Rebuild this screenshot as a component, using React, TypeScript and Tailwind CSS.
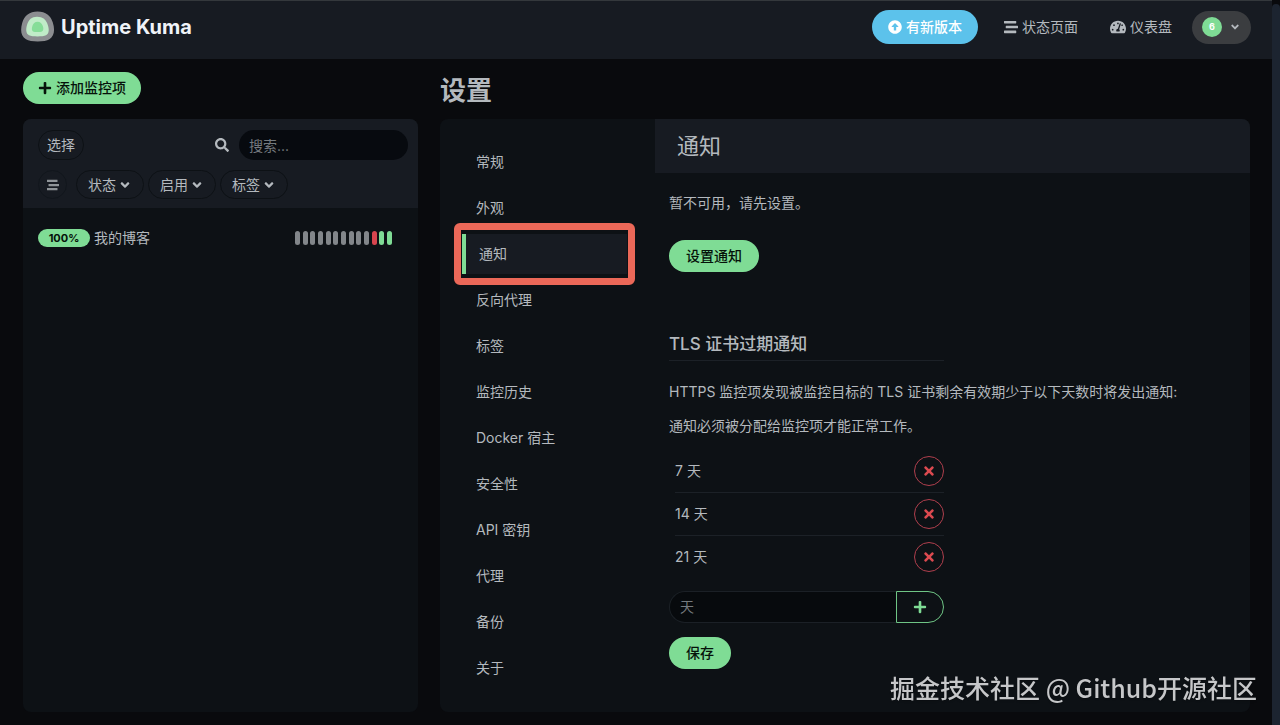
import React, { useState } from 'react';
import {
  FaArrowAltCircleUp,
  FaAngleDown,
  FaPlus,
  FaSearch,
  FaStream,
  FaTachometerAlt,
  FaTimes,
} from 'react-icons/fa';

const menuItems = [
  '常规',
  '外观',
  '通知',
  '反向代理',
  '标签',
  '监控历史',
  'Docker 宿主',
  '安全性',
  'API 密钥',
  '代理',
  '备份',
  '关于',
];

const filters = ['状态', '启用', '标签'];

const beats = [...Array(10).fill('empty'), 'down', 'up', 'up'];

const beatColors: Record<string, string> = {
  empty: 'bg-[#82868a]',
  down: 'bg-[#d8454e]',
  up: 'bg-[#7fdc95]',
};

function Logo() {
  return (
    <svg className="h-8 w-[34px] shrink-0" viewBox="0 0 34 32" aria-hidden="true">
      <path
        d="M16.5 0.5C25 0.5 29.5 4.5 31.8 11.5C34.2 19 33.2 25 28.4 28.2C24 31.2 9.5 31.2 5 28.2C-0.2 25 -0.8 19 1.2 12C3.4 4.5 8.5 0.5 16.5 0.5Z"
        fill="#8b8d90"
      />
      <path
        d="M16 5.8C22 5.8 25 8.6 26.8 14C28.4 19 28 22.6 25 24.2C21.6 25.8 11.4 25.8 8 24.2C5 22.6 4.6 19 6 14C7.6 8.6 10.6 5.8 16 5.8Z"
        fill="#c0ecc8"
      />
      <path
        d="M16.5 10.8C19.4 10.8 20.8 12.4 21.8 15C22.7 17.6 22.6 19.6 21 20.4C19.2 21.1 13.8 21.1 12 20.4C10.6 19.6 10.6 17.6 11.4 15C12.2 12.4 13.8 10.8 16.5 10.8Z"
        fill="#86dd98"
      />
    </svg>
  );
}

function Header() {
  return (
    <header className="flex h-[59px] items-center justify-between border-t border-[#34383c] bg-[#171b22] px-[21px] pb-1.5">
      <a href="#" className="flex items-center gap-1.5 text-xl font-bold text-[#f0f3f8]">
        <Logo />
        Uptime Kuma
      </a>
      <nav className="flex items-center">
        <a
          href="#"
          className="flex h-[34px] items-center gap-1 rounded-full bg-[#5cc2eb] px-4 font-medium text-white"
        >
          <FaArrowAltCircleUp className="size-3.5" />
          有新版本
        </a>
        <a href="#" className="ml-[26px] flex items-center gap-1">
          <FaStream className="size-3.5" />
          状态页面
        </a>
        <a href="#" className="ml-8 flex items-center gap-1">
          <FaTachometerAlt className="size-4" />
          仪表盘
        </a>
        <button className="ml-5 flex h-[33px] w-[59px] items-center justify-between rounded-full bg-[#3b3d40] px-2.5">
          <span className="flex size-5 items-center justify-center rounded-full bg-[#7fdc95] text-[9px] font-bold text-white">
            6
          </span>
          <FaAngleDown className="size-3" />
        </button>
      </nav>
    </header>
  );
}

function MonitorList() {
  const [search, setSearch] = useState('');

  return (
    <section className="flex flex-1 flex-col overflow-hidden rounded-[8px] bg-[#0d1115]">
      <div className="bg-[#171b22] pb-[9px] pl-[15px] pr-2.5 pt-[11px]">
        <div className="flex items-center justify-between">
          <button className="h-[30px] rounded-full border border-[#0d1115] px-2">选择</button>
          <form className="flex items-center gap-2.5" onSubmit={e => e.preventDefault()}>
            <label htmlFor="search" aria-label="搜索">
              <FaSearch className="size-3.5" />
            </label>
            <input
              id="search"
              value={search}
              onChange={e => setSearch(e.target.value)}
              placeholder="搜索..."
              className="h-[30px] w-[169px] rounded-full bg-[#070a0f] px-2.5 outline-none placeholder:text-[#757a7f]"
            />
          </form>
        </div>
        <div className="mt-2.5 flex items-center gap-1">
          <button
            className="mr-[5px] flex size-[29px] items-center justify-center rounded-full border border-[#11161c] text-[#8f9498]"
            aria-label="全部"
          >
            <FaStream className="size-3" />
          </button>
          {filters.map(name => (
            <button
              key={name}
              className="flex h-[29px] w-[68px] items-center justify-between rounded-full border border-[#0d1115] px-[11px]"
            >
              {name}
              <FaAngleDown className="size-3.5" />
            </button>
          ))}
        </div>
      </div>

      <a href="#" className="mt-5 flex items-center pl-[15px] pr-[26px]">
        <span className="flex h-[18px] w-[52px] items-center justify-center rounded-full bg-[#7fdc95] text-[11px] font-bold text-[#06120a]">
          100%
        </span>
        <span className="ml-1">我的博客</span>
        <span className="ml-auto flex w-[97px] justify-between">
          {beats.map((beat, i) => (
            <span key={i} className={`h-3.5 w-[5px] rounded-full ${beatColors[beat]}`} />
          ))}
        </span>
      </a>
    </section>
  );
}

function SettingsMenu() {
  return (
    <nav className="pb-[21px] pl-[22px] pr-7 pt-5">
      {menuItems.map(item => {
        const active = item === '通知';
        return (
          <a key={item} href="#" className="relative flex h-[46px] items-center">
            <span
              className={`flex h-10 flex-1 items-center ${
                active ? 'border-l-4 border-[#7fdc95] bg-[#171b22] pl-[13px]' : 'pl-3.5'
              }`}
            >
              {item}
            </span>
            {active && (
              <span className="pointer-events-none absolute -inset-x-2 -inset-y-2 rounded-md border-[7px] border-[#eb6858]" />
            )}
          </a>
        );
      })}
    </nav>
  );
}

function Notifications() {
  const [days, setDays] = useState([7, 14, 21]);
  const [newDay, setNewDay] = useState('');

  const addDay = () => {
    const value = parseInt(newDay, 10);
    if (value > 0 && !days.includes(value)) {
      setDays([...days, value].sort((a, b) => a - b));
    }
    setNewDay('');
  };

  return (
    <div>
      <h2 className="flex h-[54px] items-center rounded-tr-[8px] bg-[#171b22] px-[22px] text-[22px]">
        通知
      </h2>
      <div className="pl-3.5 pr-5 pt-5">
        <p>暂不可用，请先设置。</p>
        <button className="mt-[27px] flex h-8 items-center rounded-full bg-[#7fdc95] px-[17px] font-medium text-[#06120a]">
          设置通知
        </button>

        <h3 className="mt-[60px] w-[275px] border-b border-[#1c2127] pb-1 text-[17px] font-medium leading-6">
          TLS 证书过期通知
        </h3>
        <p className="mt-[21px]">HTTPS 监控项发现被监控目标的 TLS 证书剩余有效期少于以下天数时将发出通知:</p>
        <p className="mt-3.5">通知必须被分配给监控项才能正常工作。</p>

        <div className="mt-3.5 w-[275px]">
          <ul className="pl-1.5">
            {days.map(day => (
              <li
                key={day}
                className="flex h-[43px] items-center justify-between border-b border-[#1c2127] last:border-transparent"
              >
                {day} 天
                <button
                  onClick={() => setDays(days.filter(d => d !== day))}
                  className="flex size-[30px] items-center justify-center rounded-full border border-[#b03f4d] text-[#dc4a50]"
                  aria-label="删除"
                >
                  <FaTimes className="size-3.5" />
                </button>
              </li>
            ))}
          </ul>
          <div className="mt-3 flex h-8">
            <input
              value={newDay}
              onChange={e => setNewDay(e.target.value)}
              placeholder="天"
              aria-label="天"
              className="min-w-0 flex-1 rounded-l-full border border-r-0 border-[#1b2026] bg-[#070a0d] px-2.5 outline-none placeholder:text-[#757a7f]"
            />
            <button
              onClick={addDay}
              className="flex w-12 items-center justify-center rounded-r-full border border-[#6fc585] text-[#7fdc95]"
              aria-label="添加"
            >
              <FaPlus className="size-3.5" />
            </button>
          </div>
          <button className="mt-3.5 flex h-8 items-center rounded-full bg-[#7fdc95] px-[17px] font-medium text-[#06120a]">
            保存
          </button>
        </div>
      </div>
    </div>
  );
}

export default function App() {
  return (
    <div className="flex min-h-screen bg-[#090a0d] font-['Inter','Noto_Sans_CJK_SC',sans-serif] text-sm leading-5 text-[#b4b9be]">
      <div className="min-w-0 flex-1">
        <Header />
        <main className="grid grid-cols-[395fr_810fr] gap-x-[22px] pb-3 pl-[23px] pr-[22px] pt-[13px]">
          <div className="flex flex-col">
            <button className="mb-[15px] flex h-8 items-center gap-1 self-start rounded-full bg-[#7fdc95] px-[15px] font-medium text-[#06120a]">
              <FaPlus className="size-3.5" />
              添加监控项
            </button>
            <MonitorList />
          </div>
          <div>
            <h1 className="mb-3 pt-0.5 text-[26px] font-bold leading-[33px]">设置</h1>
            <div className="grid grid-cols-[215fr_595fr] rounded-[8px] bg-[#0d1115]">
              <SettingsMenu />
              <Notifications />
            </div>
          </div>
        </main>
      </div>
      <div className="mt-1 w-2 rounded-t bg-[#1c2430]" />
      <p className="fixed bottom-[22px] right-[23px] font-['Noto_Sans_CJK_SC',sans-serif] text-[25px] font-medium leading-8 text-[#c6c7c9] text-shadow-sm">
        掘金技术社区 @ Github开源社区
      </p>
    </div>
  );
}
